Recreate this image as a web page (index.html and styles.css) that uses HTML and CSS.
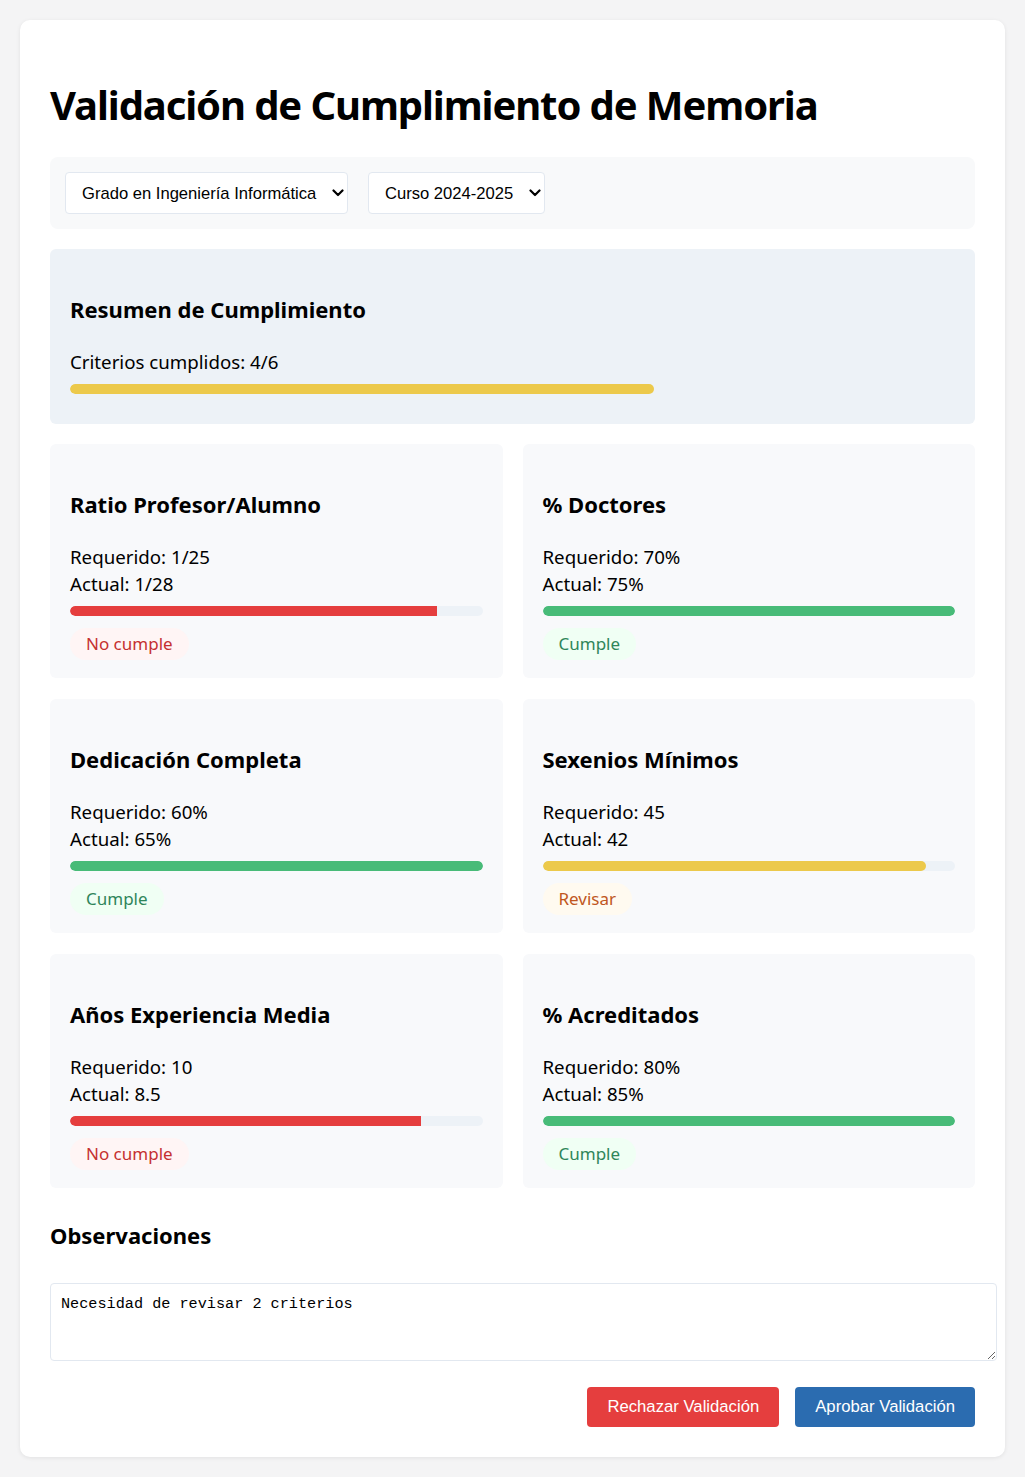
FILE: index.html
```html
<!DOCTYPE html>
<html lang="es">
<head>
<meta charset="utf-8">
<title>Validación de Cumplimiento de Memoria</title>
<link rel="stylesheet" href="styles.css">
</head>
<body>
<div class="container">
  <h1 class="title">Validación de Cumplimiento de Memoria</h1>

  <div class="filters">
    <div class="select-wrap">
      <select class="select">
        <option>Grado en Ingeniería Informática</option>
      </select>
      <svg class="chevron" width="12" height="8" viewBox="0 0 12 8"><path d="M1.5 1.5 L6 6 L10.5 1.5" fill="none" stroke="#000" stroke-width="2.2" stroke-linecap="round" stroke-linejoin="round"/></svg>
    </div>
    <div class="select-wrap">
      <select class="select">
        <option>Curso 2024-2025</option>
      </select>
      <svg class="chevron" width="12" height="8" viewBox="0 0 12 8"><path d="M1.5 1.5 L6 6 L10.5 1.5" fill="none" stroke="#000" stroke-width="2.2" stroke-linecap="round" stroke-linejoin="round"/></svg>
    </div>
  </div>

  <div class="summary">
    <h3 class="heading">Resumen de Cumplimiento</h3>
    <p class="text">Criterios cumplidos: 4/6</p>
    <div class="bar bar-summary"><div class="fill fill-yellow" style="width:66%"></div></div>
  </div>

  <div class="grid">
    <div class="card">
      <h3 class="heading">Ratio Profesor/Alumno</h3>
      <p class="text">Requerido: 1/25<br>Actual: 1/28</p>
      <div class="bar"><div class="fill fill-red" style="width:89%"></div></div>
      <span class="badge badge-red">No cumple</span>
    </div>
    <div class="card">
      <h3 class="heading">% Doctores</h3>
      <p class="text">Requerido: 70%<br>Actual: 75%</p>
      <div class="bar"><div class="fill fill-green" style="width:100%"></div></div>
      <span class="badge badge-green">Cumple</span>
    </div>
    <div class="card">
      <h3 class="heading">Dedicación Completa</h3>
      <p class="text">Requerido: 60%<br>Actual: 65%</p>
      <div class="bar"><div class="fill fill-green" style="width:100%"></div></div>
      <span class="badge badge-green">Cumple</span>
    </div>
    <div class="card">
      <h3 class="heading">Sexenios Mínimos</h3>
      <p class="text">Requerido: 45<br>Actual: 42</p>
      <div class="bar"><div class="fill fill-yellow" style="width:93%"></div></div>
      <span class="badge badge-yellow">Revisar</span>
    </div>
    <div class="card">
      <h3 class="heading">Años Experiencia Media</h3>
      <p class="text">Requerido: 10<br>Actual: 8.5</p>
      <div class="bar"><div class="fill fill-red" style="width:85%"></div></div>
      <span class="badge badge-red">No cumple</span>
    </div>
    <div class="card">
      <h3 class="heading">% Acreditados</h3>
      <p class="text">Requerido: 80%<br>Actual: 85%</p>
      <div class="bar"><div class="fill fill-green" style="width:100%"></div></div>
      <span class="badge badge-green">Cumple</span>
    </div>
  </div>

  <h3 class="heading obs-title">Observaciones</h3>
  <textarea class="notes">Necesidad de revisar 2 criterios</textarea>

  <div class="actions">
    <button class="btn btn-reject">Rechazar Validación</button>
    <button class="btn btn-approve">Aprobar Validación</button>
  </div>
</div>
</body>
</html>
```
FILE: styles.css
```css
* { box-sizing: border-box; }

body {
  margin: 0;
  padding: 20px;
  background: #f4f4f5;
  font-family: "Noto Sans", "Open Sans", sans-serif;
  color: #000;
}

.container {
  background: #fff;
  border-radius: 10px;
  box-shadow: 0 1px 4px rgba(0,0,0,0.08);
  padding: 30px;
  height: 1437px;
}

.title {
  font-size: 40px;
  line-height: 54px;
  font-weight: 700;
  margin: 28px 0 25px;
  letter-spacing: -1.1px;
}

.filters {
  display: flex;
  gap: 20px;
  background: #f8f9fa;
  border-radius: 8px;
  padding: 15px;
  margin-bottom: 20px;
}

.select-wrap {
  position: relative;
  display: flex;
}

.select {
  -webkit-appearance: none;
  appearance: none;
  font-family: "Liberation Sans", Arial, sans-serif;
  font-size: 16.6px;
  height: 42px;
  padding: 0 30px 0 16px;
  border: 1px solid #e2e8f0;
  border-radius: 4px;
  background: #fff;
  color: #000;
}

.chevron {
  position: absolute;
  right: 4px;
  top: 17px;
  pointer-events: none;
}

.summary {
  background: #edf2f7;
  border-radius: 6px;
  padding: 20px;
  margin-bottom: 20px;
}

.heading {
  font-size: 22px;
  line-height: 30px;
  font-weight: 700;
  margin: 25px 0 0;
}

.text {
  font-size: 18.7px;
  line-height: 27px;
  margin: 24px 0 0;
}

.bar {
  height: 10px;
  border-radius: 5px;
  background: #edf2f7;
  margin: 9px 0 12px;
  overflow: hidden;
}

.bar-summary { background: transparent; margin-bottom: 10px; }

.fill { height: 100%; border-radius: 5px 0 0 5px; }
.fill[style*="100%"] { border-radius: 5px; }
.fill-red { background: #e53e3e; }
.fill-green { background: #48bb78; }
.fill-yellow { background: #ecc94b; border-radius: 5px; }

.grid {
  display: grid;
  grid-template-columns: 1fr 1fr;
  gap: 21px 20px;
}

.card {
  background: #f8f9fb;
  border-radius: 6px;
  padding: 20px 20px 18px;
}

.badge {
  display: inline-block;
  font-size: 17px;
  line-height: 32px;
  padding: 0 16px;
  border-radius: 16px;
  vertical-align: top;
}

.badge-red { background: #fff5f5; color: #c53030; }
.badge-green { background: #f0fff4; color: #2f855a; }
.badge-yellow { background: #fffaf0; color: #c05621; }

.obs-title { margin: 32px 0 33px; }

.notes {
  display: block;
  width: calc(100% + 22px);
  height: 78px;
  padding: 10px;
  border: 1px solid #e2e8f0;
  border-radius: 4px;
  font-family: "Liberation Mono", monospace;
  font-size: 15.2px;
  line-height: 20px;
  color: #000;
  resize: vertical;
  margin: 0 0 26px;
}

.actions {
  display: flex;
  justify-content: flex-end;
  gap: 16px;
}

.btn {
  font-family: "Liberation Sans", Arial, sans-serif;
  font-size: 16.7px;
  line-height: 20px;
  padding: 10px 20px;
  border: none;
  border-radius: 4px;
  color: #fff;
  cursor: pointer;
}

.btn-reject { background: #e53e3e; }
.btn-approve { background: #2b6cb0; }
```
